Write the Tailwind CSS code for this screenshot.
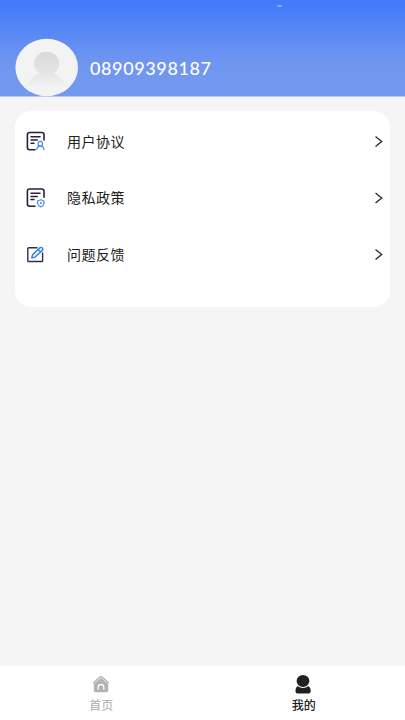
<!DOCTYPE html>
<html lang="zh-CN">
<head>
<meta charset="UTF-8">
<meta name="viewport" content="width=device-width, initial-scale=1">
<title>我的</title>
<script src="https://cdn.jsdelivr.net/npm/@tailwindcss/browser@4"></script>
</head>
<body class="h-[720px] overflow-hidden bg-[#f5f5f5] font-['Noto_Sans_CJK_SC',sans-serif]">
<div class="flex h-full flex-col">
  <header class="relative flex h-[97px] shrink-0 items-start border-b border-[#b9c8ee] bg-linear-to-b from-[#447bf9] from-5% via-[#7096f0] via-66% to-[#7398f0] pl-[15px] pt-[38px]">
    <svg class="h-[59px] w-[64px] shrink-0" viewBox="0 0 64 59" aria-hidden="true">
      <defs>
        <clipPath id="face"><ellipse cx="31.7" cy="29.5" rx="31.3" ry="28.7"/></clipPath>
        <linearGradient id="head" x1="0" y1="0" x2="0" y2="1"><stop stop-color="#d9d9d9"/><stop offset="1" stop-color="#e6e6e6"/></linearGradient>
        <linearGradient id="body" x1="0" y1="0" x2="0" y2="1"><stop stop-color="#e4e4e4"/><stop offset=".75" stop-color="#f3f3f3"/></linearGradient>
      </defs>
      <ellipse cx="31.7" cy="29.5" rx="31.3" ry="28.7" fill="#f3f3f3"/>
      <g clip-path="url(#face)">
        <path d="M10 54C12 42 20 35 31.5 35S51 42 53 54Z" fill="url(#body)"/>
        <ellipse cx="31.7" cy="25.5" rx="12.6" ry="11.7" fill="url(#head)"/>
      </g>
    </svg>
    <div class="ml-[11px] mt-[18px] font-['Lato',sans-serif] text-[18px] font-medium leading-6 tracking-[0.62px] text-white">08909398187</div>
    <span class="absolute left-[277px] top-[5px] h-[1.5px] w-[5px] rounded-full bg-white/35"></span>
  </header>

  <main class="flex-1 px-[15px] pt-[14px]">
    <section class="h-[196px] rounded-[16px] bg-white pl-[10px] pt-[2px] text-[14px] font-normal tracking-[0.5px] text-[#202020]">
      <div class="flex h-[56.5px] items-center">
        <svg class="size-[22px]" viewBox="0 0 22 22" fill="none" stroke-linecap="round" stroke-linejoin="round" aria-hidden="true">
          <path d="M10 19.7H4.6Q2.4 19.7 2.4 17.5V4.7Q2.4 2.5 4.6 2.5H16.8Q19 2.5 19 4.7V10" stroke="#27203f" stroke-width="1.6"/>
          <path d="M6 6.8H15M6 10H12.3M6 13.2H9" stroke="#27203f" stroke-width="1.5"/>
          <circle cx="15.3" cy="13.7" r="2.3" stroke="#438de8" stroke-width="1.2"/>
          <path d="M11.9 19.5Q11.9 16.2 15.3 16.2T18.8 19.5" stroke="#438de8" stroke-width="1.2"/>
        </svg>
        <span class="ml-5 flex-1">用户协议</span>
        <svg class="size-4" viewBox="0 0 16 16" fill="none" stroke="#303030" stroke-width="1.4" aria-hidden="true"><path d="M1.5 3.5L7.7 8.5L1.5 13.5"/></svg>
      </div>
      <div class="flex h-[56.5px] items-center">
        <svg class="size-[22px]" viewBox="0 0 22 22" fill="none" stroke-linecap="round" stroke-linejoin="round" aria-hidden="true">
          <path d="M10 19.2H4.6Q2.4 19.2 2.4 17V4.2Q2.4 2 4.6 2H16.8Q19 2 19 4.2V10.3" stroke="#27203f" stroke-width="1.6"/>
          <path d="M6 6.2H15M6 9.4H12.3M6 12.6H9" stroke="#27203f" stroke-width="1.5"/>
          <path d="M15.8 12.8L19 14V16.5Q18.6 18.8 15.8 19.9Q13 18.8 12.6 16.5V14Z" stroke="#438de8" stroke-width="1.2"/>
          <circle cx="15.8" cy="16.1" r="1" fill="#438de8"/>
        </svg>
        <span class="ml-5 flex-1">隐私政策</span>
        <svg class="size-4" viewBox="0 0 16 16" fill="none" stroke="#303030" stroke-width="1.4" aria-hidden="true"><path d="M1.5 3L7.7 8L1.5 13"/></svg>
      </div>
      <div class="flex h-[56.5px] items-center">
        <svg class="size-[22px]" viewBox="0 0 22 22" fill="none" stroke-linecap="round" stroke-linejoin="round" aria-hidden="true">
          <path d="M12 4.8H3.6Q2.8 4.8 2.8 5.6V17.7Q2.8 18.5 3.6 18.5H16.8Q17.6 18.5 17.6 17.7V10" stroke="#332e43" stroke-width="1.4"/>
          <path d="M6.8 14.9L7.6 11.7L14.8 4.8Q16 3.9 17.2 4.9Q18.4 6 17.5 7.2L10.2 14.1ZM13.2 6.4L15.7 8.9" fill="#e2edff" stroke="#357fdb" stroke-width="1.4"/>
        </svg>
        <span class="ml-5 flex-1">问题反馈</span>
        <svg class="size-4" viewBox="0 0 16 16" fill="none" stroke="#303030" stroke-width="1.4" aria-hidden="true"><path d="M1.5 3.5L7.7 8.5L1.5 13.5"/></svg>
      </div>
    </section>
  </main>

  <nav class="grid h-[54px] shrink-0 grid-cols-2 bg-white text-[12px] leading-[18px]">
    <a class="flex flex-col items-center pt-[9px] text-[#aaaaaa]">
      <svg class="h-5 w-5" viewBox="0 0 20 20" aria-hidden="true">
        <path d="M2.2 8.2L8.9 2.1Q10 1.2 11.1 2.1L17.8 8.2" fill="none" stroke="#b2b2b2" stroke-width="1.4"/>
        <path d="M2.8 8.9L9.2 3.6Q10 3 10.8 3.6L17.2 8.9V15.6Q17.2 17.2 15.5 17.2H4.5Q2.8 17.2 2.8 15.6Z" fill="#b2b2b2"/>
        <path d="M7.2 14.8V12Q7.2 9.5 10 9.5T12.8 12V14.8" fill="none" stroke="#fff" stroke-width="1.3"/>
      </svg>
      <span class="mt-[1px]">首页</span>
    </a>
    <a class="flex flex-col items-center pt-[9px] font-medium text-[#202020]">
      <svg class="h-5 w-5" viewBox="0 0 20 20" fill="#202020" aria-hidden="true">
        <path d="M3.6 11Q5.8 13 9 13T14.4 11Q16.8 12.6 16.8 16Q16.8 18.5 14.4 18.5H3.8Q1.4 18.5 1.4 16Q1.4 12.6 3.6 11Z"/>
        <ellipse cx="9" cy="6.1" rx="6.4" ry="6"/>
      </svg>
      <span class="mt-[1px]">我的</span>
    </a>
  </nav>
</div>
</body>
</html>
